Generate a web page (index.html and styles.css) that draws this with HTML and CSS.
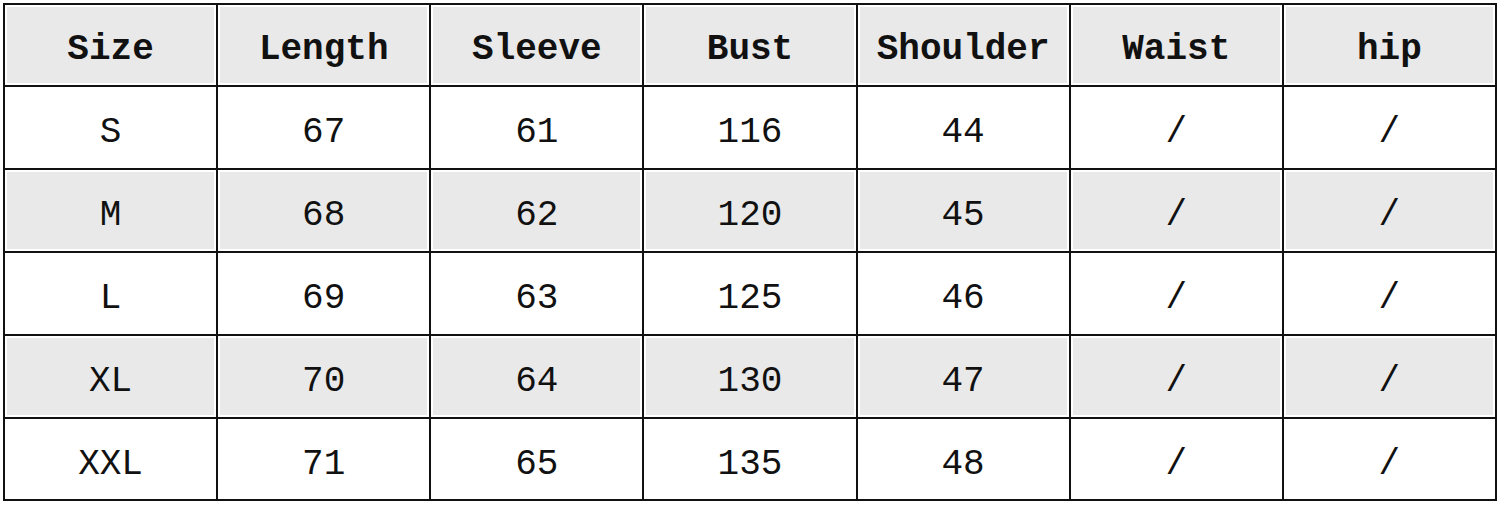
FILE: index.html
```html
<!DOCTYPE html>
<html>
<head>
<meta charset="utf-8">
<link rel="stylesheet" href="styles.css">
</head>
<body>
<div class="wrap">
<table class="sizes">
<thead>
<tr><th>Size</th><th>Length</th><th>Sleeve</th><th>Bust</th><th>Shoulder</th><th>Waist</th><th>hip</th></tr>
</thead>
<tbody>
<tr><td>S</td><td>67</td><td>61</td><td>116</td><td>44</td><td>/</td><td>/</td></tr>
<tr class="alt"><td>M</td><td>68</td><td>62</td><td>120</td><td>45</td><td>/</td><td>/</td></tr>
<tr><td>L</td><td>69</td><td>63</td><td>125</td><td>46</td><td>/</td><td>/</td></tr>
<tr class="alt"><td>XL</td><td>70</td><td>64</td><td>130</td><td>47</td><td>/</td><td>/</td></tr>
<tr class="last"><td>XXL</td><td>71</td><td>65</td><td>135</td><td>48</td><td>/</td><td>/</td></tr>
</tbody>
</table>
</div>
</body>
</html>
```
FILE: styles.css
```css
html, body {
  margin: 0;
  padding: 0;
  background: #ffffff;
}
.wrap {
  padding: 3px 3px 0 3px;
}
.sizes {
  width: 1494px;
  table-layout: fixed;
  border-collapse: collapse;
  font-family: "Liberation Mono", "DejaVu Sans Mono", monospace;
  color: #111;
}
.sizes th, .sizes td {
  border: 2px solid #111;
  text-align: center;
  vertical-align: middle;
  padding: 0;
  box-shadow: inset 0 0 0 2px #fff;
}
.sizes th {
  height: 70px;
  padding-top: 10px;
  font-size: 36px;
  font-weight: bold;
  background: #e9e9e9;
  line-height: 1;
}
.sizes td {
  height: 70px;
  padding-top: 11px;
  font-size: 36px;
  font-weight: normal;
  line-height: 1;
  background: #fff;
}
.sizes tr.last td {
  height: 69px;
}
.sizes tr.alt td {
  background: #e9e9e9;
}
```
